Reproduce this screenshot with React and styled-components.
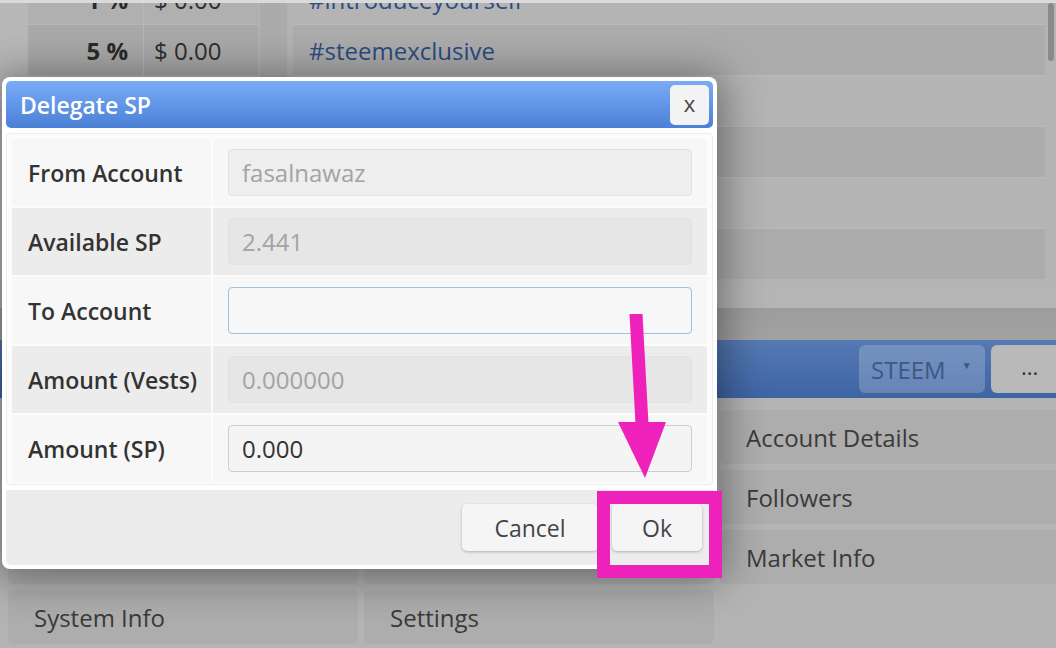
import styled, { createGlobalStyle } from "styled-components";

const GlobalStyle = createGlobalStyle`
  * { box-sizing: border-box; }
  body {
    margin: 0;
    font-family: "Open Sans", "Noto Sans", sans-serif;
    background: #b4b4b4;
  }
`;

const Screen = styled.div`
  position: relative;
  width: 1056px;
  height: 648px;
  overflow: hidden;
  background: #b4b4b4;
  border-top: 3px solid #dadada;
`;

const Page = styled.div`
  width: 1072px;
  margin-top: -29px;
  display: flex;
  flex-direction: column;
`;

/* ---------- upper area: payout table and tag list ---------- */

const TopArea = styled.div`
  display: flex;
  padding-right: 27px;
  padding-bottom: 6px;
`;

const SideStrip = styled.div`
  width: 28px;
  background: #b8b8b8;
`;

const RankTable = styled.div`
  width: 230px;
  display: flex;
  flex-direction: column;
  gap: 1px;
  background: #b6b6b6;
`;

const RankRow = styled.div`
  display: grid;
  grid-template-columns: 115px 1fr;
  gap: 1px;
  height: 50px;
  & > div {
    background: ${(p) => (p.$dark ? "#a9a9a9" : "#b0b0b0")};
  }
`;

const Percent = styled.div`
  display: flex;
  align-items: center;
  justify-content: flex-end;
  padding-right: 15px;
  font-size: 24px;
  font-weight: 700;
  color: #2a2a2a;
`;

const Money = styled.div`
  display: flex;
  align-items: center;
  padding-left: 10px;
  font-size: 24px;
  color: #2e2e2e;
`;

const Gutter = styled.div`
  width: 35px;
  padding: 0 6px 0 2px;
  background: #b3b3b3;
  & > div {
    height: 100%;
    background: #ababab;
  }
`;

const TagList = styled.div`
  flex: 1;
  display: flex;
  flex-direction: column;
  gap: 1px;
  background: #b9b9b9;
`;

const TagRow = styled.div`
  height: 50px;
  display: flex;
  align-items: center;
  padding-left: 16px;
  font-size: 24px;
  color: #2b4c80;
  background: ${(p) => (p.$dark ? "#acacac" : "#b4b4b4")};
`;

const Band = styled.div`
  height: 23px;
  background: #b5b5b5;
`;

const DarkBand = styled.div`
  height: 32px;
  background: linear-gradient(#9d9d9d, #a2a2a2);
`;

/* ---------- wallet toolbar ---------- */

const WalletBar = styled.div`
  height: 58px;
  display: flex;
  align-items: center;
  justify-content: flex-end;
  gap: 6px;
  background: linear-gradient(#5479b3, #3f64a4);
`;

const CoinSelect = styled.div`
  width: 126px;
  height: 48px;
  display: flex;
  align-items: center;
  padding-left: 12px;
  gap: 16px;
  border-radius: 6px;
  background: rgba(255, 255, 255, 0.2);
  color: #3d5883;
  font-size: 24px;
  span {
    font-size: 10px;
    margin-top: -8px;
  }
`;

const MoreButton = styled.div`
  width: 81px;
  height: 48px;
  display: flex;
  align-items: center;
  padding: 0 0 6px 30px;
  border-radius: 6px;
  background: #b9b9b9;
  color: #333;
  font-size: 22px;
`;

/* ---------- wallet menu tiles ---------- */

const MenuGrid = styled.div`
  display: grid;
  grid-template-columns: repeat(3, 350px);
  grid-auto-rows: 54px;
  gap: 6px;
  padding: 12px 0 0 8px;
`;

const Tile = styled.div`
  display: flex;
  align-items: center;
  padding-left: 26px;
  border-radius: 5px;
  background: ${(p) => (p.$empty ? "transparent" : "#adadad")};
  color: #3a3a3a;
  font-size: 24px;
`;

const Scrollbar = styled.div`
  position: absolute;
  top: 0;
  right: 2px;
  width: 6px;
  height: 58px;
  border-radius: 3px;
  background: #8a8a8a;
`;

/* ---------- delegate dialog ---------- */

const Dialog = styled.div`
  position: absolute;
  left: 2px;
  top: 74px;
  width: 715px;
  padding: 4px;
  display: flex;
  flex-direction: column;
  gap: 5px;
  border-radius: 8px;
  background: #fff;
  box-shadow: 0 4px 40px 8px rgba(0, 0, 0, 0.38);
`;

const DialogHeader = styled.div`
  height: 47px;
  display: flex;
  align-items: center;
  justify-content: space-between;
  padding: 0 4px 0 14px;
  border-radius: 5px;
  background: linear-gradient(#7aabf6, #4a80d6);
  color: #fff;
  font-size: 23px;
  font-weight: 600;
`;

const CloseButton = styled.button`
  width: 39px;
  height: 40px;
  border: none;
  border-radius: 5px;
  background: #f3f3f3;
  color: #444;
  font-family: inherit;
  font-size: 22px;
  padding: 0 0 4px;
`;

const DialogBody = styled.div`
  padding: 5px 5px 2px;
  border: 1px solid #ececec;
  border-radius: 4px;
  background: #fcfcfc;
  display: flex;
  flex-direction: column;
  gap: 2px;
`;

const FieldRow = styled.div`
  display: grid;
  grid-template-columns: 199px 1fr;
  gap: 2px;
  height: 67px;
  & > * {
    background: ${(p) => (p.$alt ? "#ececec" : "#f7f7f7")};
  }
`;

const Label = styled.div`
  display: flex;
  align-items: center;
  padding-left: 16px;
  font-size: 23px;
  font-weight: 600;
  color: #333;
`;

const InputCell = styled.div`
  display: flex;
  align-items: center;
  padding: 0 15px;
`;

const Field = styled.input`
  width: 100%;
  height: 47px;
  padding: 0 13px;
  border: 1px solid ${(p) => p.$border || "#e2e2e2"};
  border-radius: 4px;
  background: ${(p) => p.$bg || "#eeeeee"};
  color: ${(p) => (p.disabled ? "#a3a3a3" : "#333")};
  font-family: inherit;
  font-size: 24px;
  outline: none;
`;

const DialogFooter = styled.div`
  height: 75px;
  display: flex;
  align-items: center;
  justify-content: flex-end;
  gap: 14px;
  padding-right: 11px;
  border-radius: 0 0 5px 5px;
  background: #ececec;
`;

const FooterButton = styled.button`
  width: ${(p) => p.$width}px;
  height: 47px;
  border: none;
  border-radius: 5px;
  background: #f5f5f5;
  box-shadow: 0 1px 3px rgba(0, 0, 0, 0.25);
  color: #444;
  font-family: inherit;
  font-size: 23px;
`;

/* ---------- pink callout over the confirm button ---------- */

const CalloutBox = styled.div`
  position: absolute;
  left: 597px;
  top: 488px;
  width: 125px;
  height: 87px;
  border: 13px solid #ee22bb;
`;

const CalloutArrow = styled.svg`
  position: absolute;
  left: 610px;
  top: 305px;
`;

const fields = [
  { label: "From Account", value: "fasalnawaz", disabled: true },
  { label: "Available SP", value: "2.441", disabled: true, alt: true },
  { label: "To Account", value: "", border: "#9fc0e2", bg: "#f7f7f7" },
  { label: "Amount (Vests)", value: "0.000000", disabled: true, alt: true },
  { label: "Amount (SP)", value: "0.000", border: "#cecece", bg: "#f4f4f4" },
];

const tags = ["#introduceyourself", "#steemexclusive", "", "", "", ""];

export default function App() {
  return (
    <>
      <GlobalStyle />
      <Screen>
        <Page>
          <TopArea>
            <SideStrip />
            <RankTable>
              <RankRow>
                <Percent>1 %</Percent>
                <Money>$ 0.00</Money>
              </RankRow>
              <RankRow $dark>
                <Percent>5 %</Percent>
                <Money>$ 0.00</Money>
              </RankRow>
            </RankTable>
            <Gutter>
              <div />
            </Gutter>
            <TagList>
              {tags.map((t, i) => (
                <TagRow key={i} $dark={i % 2 === 1}>
                  {t}
                </TagRow>
              ))}
            </TagList>
          </TopArea>
          <Band />
          <DarkBand />
          <WalletBar>
            <CoinSelect>
              STEEM <span>▼</span>
            </CoinSelect>
            <MoreButton>...</MoreButton>
          </WalletBar>
          <MenuGrid>
            <Tile />
            <Tile />
            <Tile>Account Details</Tile>
            <Tile />
            <Tile />
            <Tile>Followers</Tile>
            <Tile />
            <Tile />
            <Tile>Market Info</Tile>
            <Tile>System Info</Tile>
            <Tile>Settings</Tile>
            <Tile $empty />
          </MenuGrid>
        </Page>
        <Scrollbar />

        <Dialog>
          <DialogHeader>
            Delegate SP
            <CloseButton>x</CloseButton>
          </DialogHeader>
          <DialogBody>
            {fields.map((f) => (
              <FieldRow key={f.label} $alt={f.alt}>
                <Label>{f.label}</Label>
                <InputCell>
                  <Field
                    readOnly
                    disabled={f.disabled}
                    value={f.value}
                    $border={f.border}
                    $bg={f.disabled ? (f.alt ? "#e6e6e6" : "#eeeeee") : f.bg}
                  />
                </InputCell>
              </FieldRow>
            ))}
          </DialogBody>
          <DialogFooter>
            <FooterButton $width={136}>Cancel</FooterButton>
            <FooterButton $width={90}>Ok</FooterButton>
          </DialogFooter>
        </Dialog>

        <CalloutArrow width="80" height="175" viewBox="0 0 80 175">
          <polygon points="19.5,6 32.5,6 38.5,116 25.5,116" fill="#ee22bb" />
          <polygon points="8,114 56,114 35,170" fill="#ee22bb" />
        </CalloutArrow>
        <CalloutBox />
      </Screen>
    </>
  );
}
